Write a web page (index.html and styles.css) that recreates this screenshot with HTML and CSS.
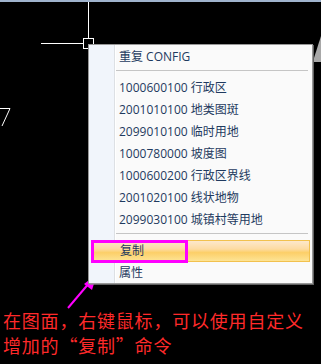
FILE: index.html
```html
<!DOCTYPE html>
<html lang="zh-CN">
<head>
  <meta charset="UTF-8" />
  <title>右键菜单</title>
  <link rel="stylesheet" href="styles.css">
</head>
<body>
  <div class="stage">
    <svg class="canvas" width="321" height="364" viewBox="0 0 321 364">
      <!-- crosshair + pickbox -->
      <line x1="88.5" y1="2" x2="88.5" y2="38" stroke="#fff" />
      <line x1="41" y1="43.5" x2="83" y2="43.5" stroke="#fff" />
      <rect x="83.5" y="38.5" width="10" height="10" fill="none" stroke="#fff" />
      <!-- leftover geometry -->
      <polyline points="0,108.5 10,108.5 2,126" fill="none" stroke="#fff" />
      <polygon points="314,58 321,36 321,62 314,62" fill="#a8a8a8" />
      <!-- annotation arrow -->
      <line x1="68" y1="308" x2="90" y2="282" stroke="#f0f" stroke-width="2" />
      <polygon points="97,274 84,284 92,290" fill="#f0f" />
    </svg>

    <div class="menu">
      <div class="item">重复 CONFIG</div>
      <div class="sep"></div>
      <div class="item">1000600100 行政区</div>
      <div class="item">2001010100 地类图斑</div>
      <div class="item">2099010100 临时用地</div>
      <div class="item">1000780000 坡度图</div>
      <div class="item">1000600200 行政区界线</div>
      <div class="item">2001020100 线状地物</div>
      <div class="item">2099030100 城镇村等用地</div>
      <div class="sep"></div>
      <div class="item active">复制<span class="mark"></span></div>
      <div class="item">属性</div>
    </div>

    <p class="note">在图面，右键鼠标，可以使用自定义<br>增加的“复制”命令</p>
  </div>
</body>
</html>
```

FILE: styles.css
```css
* { box-sizing: border-box; }
html, body { margin: 0; padding: 0; background: #000; }
.stage { position: relative; width: 321px; height: 364px; overflow: hidden; border-top: 2px solid #9fb3cd; padding-top: 306px; }
.canvas { position: absolute; left: 0; top: -2px; }

.menu {
  position: absolute; left: 88px; top: 42px; width: 225px; height: 240px;
  border: 1px solid #979797; padding: 1px 0;
  background: linear-gradient(to right, #f1f5fb 0 25px, #dde0e4 25px 26px, #fff 26px 27px, #fafafa 27px);
  box-shadow: 1px 1px 0 rgba(140,140,140,0.7);
  font-family: "Open Sans", "Noto Sans CJK SC", sans-serif; font-size: 12px; color: #1f3a5f;
}
.item { position: relative; height: 22px; line-height: 22px; padding-left: 30px; white-space: nowrap; }
.item.active {
  margin: 0 2px; padding-left: 28px; line-height: 20px;
  border: 1px solid #f2c14e;
  background: linear-gradient(#fde8cc, #fddba2 40%, #fccf68 58%, #fde495 100%);
}
.sep { height: 1px; margin: 2px 4px 6px 27px; background: #c5c5c5; }
.mark { position: absolute; left: -1px; top: -1px; width: 97px; height: 23px; border: 3px solid #f0f; }

.note {
  margin: 0; padding-left: 3px;
  font-family: "Noto Sans CJK SC", sans-serif; font-size: 18px; line-height: 25px;
  letter-spacing: 0.8px; color: #ff2a2a;
}
```
